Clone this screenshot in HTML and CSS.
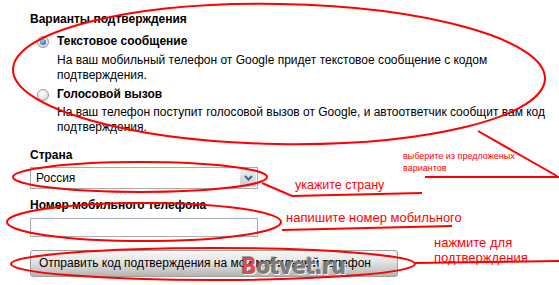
FILE: index.html
```
<!DOCTYPE html>
<html lang="ru">
<head>
<meta charset="utf-8">
<title>Варианты подтверждения</title>
<link rel="stylesheet" href="styles.css">
</head>
<body>
<div class="page">
  <form class="form">
    <div class="heading">Варианты подтверждения</div>
    <div class="option option-sms">
      <label class="opt-label"><span class="radio checked"></span>Текстовое сообщение</label>
      <div class="desc">На ваш мобильный телефон от Google придет текстовое сообщение с кодом<br>подтверждения.</div>
    </div>
    <div class="option option-voice">
      <label class="opt-label"><span class="radio"></span>Голосовой вызов</label>
      <div class="desc">На ваш телефон поступит голосовой вызов от Google, и автоответчик сообщит вам код<br>подтверждения.</div>
    </div>
    <div class="field-label country-label">Страна</div>
    <div class="select">
      <span class="select-value">Россия</span>
      <span class="select-btn"><svg width="9" height="6" viewBox="0 0 9 6"><path d="M1 1 L4.5 4.5 L8 1" fill="none" stroke="#4d6185" stroke-width="2"/></svg></span>
    </div>
    <div class="field-label phone-label">Номер мобильного телефона</div>
    <div class="input"></div>
    <div class="button">Отправить код подтверждения на мой мобильный телефон</div>
  </form>

  <svg class="marks" width="559" height="285" viewBox="0 0 559 285">
    <g fill="none" stroke="#ff0000" stroke-width="2">
      <ellipse cx="279" cy="74" rx="266" ry="70" transform="rotate(1 279 74)"/>
      <path d="M478 131 L557 176"/>
      <path d="M425 177 L559 177"/>
      <ellipse cx="140" cy="177" rx="127" ry="15"/>
      <path d="M262 183 L292 196 L422 193"/>
      <ellipse cx="144" cy="222" rx="137" ry="19"/>
      <path d="M282 230 L452 226"/>
      <ellipse cx="213" cy="264" rx="202" ry="16"/>
      <path d="M414 263 L559 261"/>
    </g>
  </svg>

  <div class="note note-variants">выберите из предложеных<br>вариантов</div>
  <div class="note note-country">укажите страну</div>
  <div class="note note-phone">напишите номер мобильного</div>
  <div class="note note-confirm">нажмите для<br>подтверждения</div>
  <div class="watermark"><span class="wm-b">B</span>otvet.ru</div>
</div>
</body>
</html>
```
FILE: styles.css
```
html, body {
  margin: 0;
  padding: 0;
  background: #ffffff;
}
.page {
  position: relative;
  width: 559px;
  height: 285px;
  overflow: hidden;
  font-family: "Liberation Sans", Arial, sans-serif;
  font-size: 12px;
  color: #000;
}
.form {
  display: flex;
  flex-direction: column;
  align-items: flex-start;
  padding: 12px 0 0 30px;
}
.heading {
  font-weight: bold;
  line-height: 15px;
}
.option {
  display: flex;
  flex-direction: column;
  padding-left: 7px;
}
.option-sms { margin-top: 7px; }
.option-voice { margin-top: 4px; }
.opt-label {
  display: flex;
  align-items: center;
  font-weight: bold;
  line-height: 15px;
}
.radio {
  width: 10px;
  height: 10px;
  border-radius: 50%;
  border: 1px solid #9a9a9a;
  background: radial-gradient(circle at 40% 35%, #ffffff 0%, #e6e6e6 55%, #c2c2c2 100%);
  margin-right: 8px;
  box-sizing: content-box;
  position: relative;
}
.radio.checked::after {
  content: "";
  position: absolute;
  left: 2px;
  top: 2px;
  width: 6px;
  height: 6px;
  border-radius: 50%;
  background: radial-gradient(circle at 40% 35%, #a6d8fa 0%, #2a80cc 60%, #12508f 100%);
}
.desc {
  padding-left: 20px;
  line-height: 15px;
  white-space: nowrap;
}
.option-sms .desc { margin-top: 4px; }
.option-voice .desc { margin-top: 3px; }
.field-label {
  font-weight: bold;
  line-height: 15px;
}
.country-label { margin-top: 13px; }
.select {
  margin-top: 4px;
  width: 228px;
  height: 22px;
  box-sizing: border-box;
  border: 1px solid #a5acb2;
  display: flex;
  align-items: center;
  justify-content: space-between;
  background: #fff;
}
.select-value { padding-left: 5px; }
.select-btn {
  width: 16px;
  height: 18px;
  margin-right: 1px;
  display: flex;
  align-items: center;
  justify-content: center;
  background: linear-gradient(#eef0f2, #c6ccd3);
  border-radius: 2px;
}
.phone-label { margin-top: 9px; }
.input {
  margin-top: 5px;
  width: 228px;
  height: 19px;
  box-sizing: border-box;
  border: 1px solid #a5acb2;
  background: #fff;
}
.button {
  margin-top: 13px;
  width: 368px;
  height: 27px;
  box-sizing: border-box;
  border: 1px solid #a0a0a0;
  border-radius: 3px;
  background: linear-gradient(#f7f7f7 0%, #e8e8e8 35%, #cbcbcb 75%, #b3b3b3 100%);
  padding: 0 0 0 8px;
  line-height: 25px;
  white-space: nowrap;
}
.marks {
  position: absolute;
  left: 0;
  top: 0;
}
.note {
  position: absolute;
  color: #ff0000;
  white-space: nowrap;
  font-size: 13px;
  line-height: 15px;
}
.note-variants {
  left: 403px;
  top: 150px;
  font-size: 9px;
  line-height: 12px;
}
.note-country { left: 295px; top: 178px; font-size: 12.5px; }
.note-phone { left: 286px; top: 210px; font-size: 13px; }
.note-confirm { left: 434px; top: 235px; font-size: 13px; line-height: 15px; }
.watermark {
  position: absolute;
  left: 241px;
  top: 255px;
  font-family: "Liberation Sans Narrow", "DejaVu Sans", sans-serif;
  font-stretch: condensed;
  font-weight: bold;
  font-size: 23px;
  line-height: 22px;
  letter-spacing: -0.6px;
  color: rgba(110, 110, 110, 0.9);
  text-shadow: 1px 1px 0 rgba(255,255,255,0.9), -1px -1px 0 rgba(40,40,40,0.4);
}
.wm-b { color: rgba(210, 60, 60, 0.9); }
```
